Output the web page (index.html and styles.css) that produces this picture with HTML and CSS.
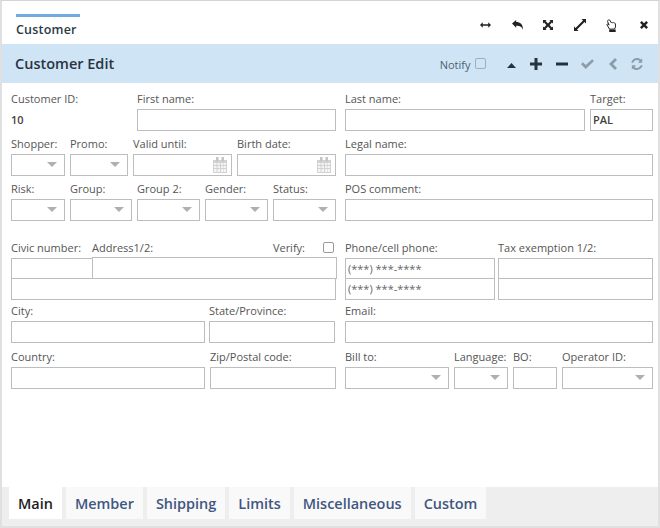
FILE: index.html
```html
<!DOCTYPE html>
<html>
<head>
  <meta charset="UTF-8">
  <title>Customer</title>
  <link rel="stylesheet" href="styles.css">
</head>
<body>
  <svg class="defs" width="0" height="0">
    <symbol id="caret" viewBox="0 0 10 5"><path d="M0 0h10L5 5z"/></symbol>
    <symbol id="cal" viewBox="0 0 14 16">
      <path fill="#d2d2d2" d="M0 3h14v13H0z"/>
      <path fill="#f4f4f4" d="M1 6h2.500v2H1zM4.500 6H7v2H4.500zM8 6h2.500v2H8zM11 6h2v2h-2zM1 9h2.500v2H1zM4.500 9H7v2H4.500zM8 9h2.500v2H8zM11 9h2v2h-2zM1 12h2.500v3H1zM4.500 12H7v3H4.500zM8 12h2.500v3H8zM11 12h2v3h-2z"/>
      <path fill="#c4c4c4" d="M3 0h2.500v4.500H3zM8.500 0H11v4.500H8.500z"/>
    </symbol>
  </svg>

  <div class="window">
    <div class="topbar">
      <div class="tab-title">Customer</div>
      <div class="win-icons">
        <svg class="ico" viewBox="0 0 12 6"><path d="M0 3l3-3v2.300h6V0l3 3-3 3V3.700H3V6z"/></svg>
        <svg class="ico reply" viewBox="0 0 11 10"><path d="M0 3.600L4.200 0v2.100c3.900 0 6.800 1.900 6.800 7.900-1-3.300-2.800-4.300-6.800-4.300v2z"/></svg>
        <svg class="ico alt" viewBox="0 0 10 10"><path d="M0 0h3.600L2.500 1.100 5 3.400l2.500-2.300L6.400 0H10v3.600L8.900 2.500 6.600 5l2.300 2.500L10 6.400V10H6.400l1.100-1.100L5 6.600 2.500 8.900 3.600 10H0V6.400l1.100 1.100L3.400 5 1.100 2.500 0 3.600z"/></svg>
        <svg class="ico expand" viewBox="0 0 12 12"><path d="M7.500 0H12v4.500l-1.500-1.500-7.500 7.500L4.500 12H0V7.500L1.500 9 9 1.500z"/></svg>
        <svg class="ico hand" viewBox="0 0 11 13"><path fill="none" stroke="#222" stroke-width="1" d="M2.200 1.100c.7-.6 1.400-.3 1.800.4l1.300 2.300c.5-.5 1.200-.4 1.500 0 .5-.4 1.100-.2 1.400.3.500-.2 1-.1 1.200.7l.1 3.100-1 2.200H3.500L1 5.900c-.3-.8.500-1.300 1.100-.7l1 .9-1.500-3.500c-.2-.6 0-1 .6-1.500z"/><path d="M3.200 10.500h6.500V13H3.200z"/></svg>
        <svg class="ico close" viewBox="0 0 8 8"><path d="M1.700 0L4 2.300 6.300 0 8 1.700 5.700 4 8 6.300 6.300 8 4 5.700 1.700 8 0 6.300 2.300 4 0 1.700z"/></svg>
      </div>
    </div>

    <div class="panel-head">
      <h1>Customer Edit</h1>
      <div class="tools">
        <span class="notify">Notify</span>
        <span class="check notify-check"></span>
        <svg class="tool caret-up" viewBox="0 0 9 5"><path d="M4.500 0L9 5H0z"/></svg>
        <svg class="tool" viewBox="0 0 12 12"><path d="M4.500 0h3v4.500H12v3H7.500V12h-3V7.500H0v-3h4.500z"/></svg>
        <svg class="tool minus" viewBox="0 0 12 12"><path d="M0 4.500h12v3H0z"/></svg>
        <svg class="tool off ok" viewBox="0 0 14 12"><path d="M0 6.200l2-2 3.100 3L12 .8l2 2-8.900 8.700z"/></svg>
        <svg class="tool off back" viewBox="0 0 12 12"><path d="M8 0l2 2-4 4 4 4-2 2-6-6z"/></svg>
        <svg class="tool off" viewBox="0 0 12 12"><path d="M6 0c1.600 0 3 .6 4 1.600L11.200.5v4.200H7l1.500-1.600C7.900 2.500 7 2.100 6 2.100 4.300 2.100 2.900 3.200 2.300 4.700H.3C.9 2 3.200 0 6 0zM.8 7.300H5L3.500 8.900c.6.600 1.500 1 2.500 1 1.700 0 3.100-1.100 3.700-2.600h2C11.100 10 8.800 12 6 12c-1.600 0-3-.6-4-1.600L.8 11.500z"/></svg>
      </div>
    </div>

    <form class="form">
      <div class="col col-left">
        <div class="row">
          <div class="field w121">
            <label>Customer ID:</label>
            <div class="value">10</div>
          </div>
          <div class="field grow">
            <label>First name:</label>
            <div class="box"></div>
          </div>
        </div>
        <div class="row">
          <div class="field w54"><label>Shopper:</label><div class="box drop"><svg><use href="#caret"/></svg></div></div>
          <div class="field w58"><label>Promo:</label><div class="box drop"><svg><use href="#caret"/></svg></div></div>
          <div class="field grow"><label>Valid until:</label><div class="box date"><svg><use href="#cal"/></svg></div></div>
          <div class="field grow"><label>Birth date:</label><div class="box date"><svg><use href="#cal"/></svg></div></div>
        </div>
        <div class="row">
          <div class="field w54"><label>Risk:</label><div class="box drop"><svg><use href="#caret"/></svg></div></div>
          <div class="field w62"><label>Group:</label><div class="box drop"><svg><use href="#caret"/></svg></div></div>
          <div class="field grow"><label>Group 2:</label><div class="box drop"><svg><use href="#caret"/></svg></div></div>
          <div class="field grow"><label>Gender:</label><div class="box drop"><svg><use href="#caret"/></svg></div></div>
          <div class="field grow"><label>Status:</label><div class="box drop"><svg><use href="#caret"/></svg></div></div>
        </div>
        <div class="row address">
          <div class="field grow">
            <div class="addr-labels">
              <label class="civic">Civic number:</label>
              <label>Address1/2:</label>
              <label class="verify">Verify:</label>
              <span class="check"></span>
            </div>
            <div class="stack">
              <div class="addr-top">
                <div class="box flat civic-box"></div>
                <div class="box flat grow"></div>
              </div>
              <div class="box flat addr-two"></div>
            </div>
          </div>
        </div>
        <div class="row tall city-row">
          <div class="field w194"><label>City:</label><div class="box"></div></div>
          <div class="field w126"><label>State/Province:</label><div class="box"></div></div>
        </div>
        <div class="row">
          <div class="field w194"><label>Country:</label><div class="box"></div></div>
          <div class="field w126"><label>Zip/Postal code:</label><div class="box"></div></div>
        </div>
      </div>

      <div class="col col-right">
        <div class="row">
          <div class="field grow"><label>Last name:</label><div class="box"></div></div>
          <div class="field w63"><label>Target:</label><div class="box text">PAL</div></div>
        </div>
        <div class="row">
          <div class="field grow"><label>Legal name:</label><div class="box"></div></div>
        </div>
        <div class="row">
          <div class="field grow"><label>POS comment:</label><div class="box"></div></div>
        </div>
        <div class="row address tax-row">
          <div class="field w150">
            <label>Phone/cell phone:</label>
            <div class="stack">
              <div class="box flat mask">(***) ***-****</div>
              <div class="box flat mask">(***) ***-****</div>
            </div>
          </div>
          <div class="field grow">
            <label>Tax exemption 1/2:</label>
            <div class="stack">
              <div class="box flat"></div>
              <div class="box flat"></div>
            </div>
          </div>
        </div>
        <div class="row tall">
          <div class="field grow"><label>Email:</label><div class="box"></div></div>
        </div>
        <div class="row">
          <div class="field w104"><label>Bill to:</label><div class="box drop"><svg><use href="#caret"/></svg></div></div>
          <div class="field w54"><label>Language:</label><div class="box drop"><svg><use href="#caret"/></svg></div></div>
          <div class="field w44"><label>BO:</label><div class="box"></div></div>
          <div class="field grow"><label>Operator ID:</label><div class="box drop"><svg><use href="#caret"/></svg></div></div>
        </div>
      </div>
    </form>

    <div class="tabs">
      <div class="tab active">Main</div>
      <div class="tab">Member</div>
      <div class="tab">Shipping</div>
      <div class="tab">Limits</div>
      <div class="tab">Miscellaneous</div>
      <div class="tab">Custom</div>
    </div>
  </div>
</body>
</html>
```

FILE: styles.css
```css
html, body {
  margin: 0;
  padding: 0;
}

body {
  width: 660px;
  height: 528px;
  overflow: hidden;
  font-family: "Open Sans", "Noto Sans", sans-serif;
  background-color: #fff;
}

.defs {
  display: block;
  height: 0;
}

.window {
  box-sizing: border-box;
  display: flex;
  flex-direction: column;
  width: 660px;
  height: 528px;
  border: 2px solid #e0e0e0;
  border-top: 1px solid #d4d4d4;
}

.topbar {
  display: flex;
  justify-content: space-between;
  height: 43px;
  padding-left: 14px;
  padding-right: 10px;
}

.tab-title {
  box-sizing: border-box;
  width: 64px;
  height: 28px;
  margin-top: 13px;
  border-top: 3px solid #6faae2;
  padding-top: 3px;
  font-size: 12.500px;
  font-weight: 600;
  line-height: 19px;
  color: #2d3a45;
  letter-spacing: 0.2px;
}

.win-icons {
  display: flex;
  align-items: center;
  gap: 21px;
  padding-top: 5px;
}

.ico {
  width: 11px;
  height: 6px;
  fill: #222;
}

.ico.reply {
  height: 10px;
}

.ico.alt {
  width: 10px;
  height: 10px;
  margin-left: -1px;
}

.ico.expand {
  width: 12px;
  height: 12px;
}

.ico.hand {
  height: 13px;
  margin-left: -1px;
}

.ico.close {
  width: 8px;
  height: 8px;
  margin-left: 2px;
}

.panel-head {
  display: flex;
  justify-content: space-between;
  align-items: center;
  height: 39px;
  padding-left: 13px;
  padding-right: 15px;
  background-color: #cfe5f6;
}

.panel-head h1 {
  margin: 0;
  font-size: 14.500px;
  font-weight: 600;
  color: #28343f;
}

.tools {
  display: flex;
  align-items: center;
}

.notify {
  margin-right: 4px;
  padding-top: 2px;
  font-size: 11px;
  color: #50606e;
}

.check {
  box-sizing: border-box;
  display: block;
  width: 11px;
  height: 11px;
  border: 1px solid #9a9a9a;
  border-radius: 2px;
  background-color: #fff;
}

.notify-check {
  margin-right: 21px;
  border-color: #9fb0bd;
  background-color: transparent;
}

.tool {
  width: 12px;
  height: 12px;
  margin-right: 14px;
  fill: #26323c;
}

.tool:last-child {
  margin-right: 0;
}

.tool.caret-up {
  width: 9px;
  height: 5px;
  margin-top: 3px;
}

.tool.minus {
  margin-right: 13px;
}

.tool.ok {
  width: 13px;
  margin-right: 13px;
}

.tool.back {
  margin-right: 12.500px;
}

.tool.off {
  fill: #8f9ca6;
}

.form {
  display: flex;
  gap: 9px;
  flex: 1;
  padding-left: 9px;
  padding-top: 8px;
}

.col {
  display: flex;
  flex-direction: column;
}

.col-left {
  width: 325px;
}

.col-right {
  width: 308px;
}

.row {
  display: flex;
  gap: 5px;
  height: 45px;
}

.row.tall {
  height: 46px;
}

.row.address {
  height: 63px;
  margin-top: 14px;
}

.row.tax-row {
  gap: 3px;
}

.row.city-row {
  gap: 4px;
}

.field {
  display: flex;
  flex-direction: column;
  min-width: 0;
}

.grow { flex: 1; }
.w44 { width: 44px; }
.w54 { width: 54px; }
.w58 { width: 58px; }
.w62 { width: 62px; }
.w63 { width: 63px; }
.w104 { width: 104px; }
.w121 { width: 121px; }
.w126 { width: 126px; }
.w150 { width: 150px; }
.w194 { width: 194px; }

label {
  display: block;
  height: 18px;
  font-size: 11px;
  line-height: 15px;
  color: #555;
  white-space: nowrap;
}

.value {
  padding-top: 3px;
  font-size: 11px;
  font-weight: 600;
  line-height: 15px;
  color: #444;
}

.box {
  box-sizing: border-box;
  position: relative;
  height: 22px;
  border: 1px solid #bdbdbd;
  background-color: #fff;
}

.box.text {
  padding-left: 2px;
  font-size: 11px;
  font-weight: 600;
  line-height: 20px;
  color: #444;
}

.box.drop svg {
  position: absolute;
  right: 7px;
  top: 7px;
  width: 10px;
  height: 5px;
  fill: #b0b0b0;
}

.box.date svg {
  position: absolute;
  right: 4px;
  top: 2px;
  width: 14px;
  height: 16px;
}

.stack {
  display: flex;
  flex-direction: column;
}

.box.flat {
  height: 21px;
}

.stack .box.flat + .box.flat,
.box.addr-two {
  margin-top: -1px;
  height: 22px;
}

.box.mask {
  padding-left: 2px;
  font-size: 11px;
  line-height: 20px;
  color: #666;
}

.addr-labels {
  display: flex;
  align-items: flex-start;
  height: 18px;
}

.civic {
  width: 81px;
}

.verify {
  margin-left: auto;
  margin-right: 18px;
}

.addr-labels .check {
  margin-top: 2px;
  margin-right: 2px;
}

.addr-top {
  display: flex;
  margin-right: -1px;
}

.civic-box {
  width: 81px;
  border-right: 0;
}

.tabs {
  display: flex;
  gap: 4px;
  height: 39px;
  padding-left: 7px;
  background-color: #eee;
}

.tab {
  box-sizing: border-box;
  height: 32px;
  padding: 0 9px;
  font-size: 14.460px;
  font-weight: 600;
  line-height: 33px;
  color: #3f5680;
  background-color: #f9f9f9;
}

.tab.active {
  color: #1c1c1c;
  background-color: #fff;
}
```
